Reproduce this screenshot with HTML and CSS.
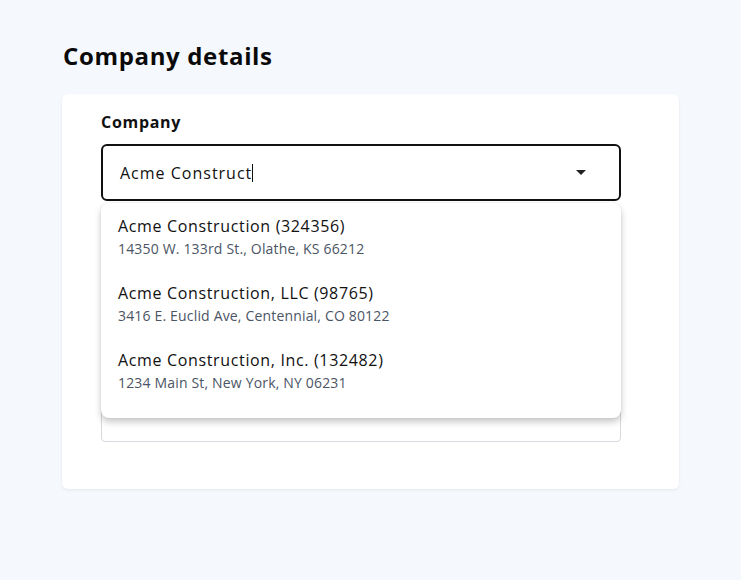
FILE: index.html
```html
<!DOCTYPE html>
<html lang="en">
<head>
<meta charset="utf-8">
<title>Company details</title>
<link rel="stylesheet" href="styles.css">
</head>
<body>
<main class="page">
  <h1 class="title">Company details</h1>
  <section class="card">
    <div class="field">
      <label class="label" for="company">Company</label>
      <div class="combo">
        <div class="input input-active">
          <span class="value">Acme Construct</span><span class="caret"></span>
          <svg class="arrow" width="10" height="5" viewBox="0 0 10 5"><path d="M0 0h10L5 5z" fill="#222"/></svg>
        </div>
        <ul class="menu">
          <li class="option">
            <div class="opt-name">Acme Construction (324356)</div>
            <div class="opt-addr">14350 W. 133rd St., Olathe, KS 66212</div>
          </li>
          <li class="option">
            <div class="opt-name">Acme Construction, LLC (98765)</div>
            <div class="opt-addr">3416 E. Euclid Ave, Centennial, CO 80122</div>
          </li>
          <li class="option">
            <div class="opt-name">Acme Construction, Inc. (132482)</div>
            <div class="opt-addr">1234 Main St, New York, NY 06231</div>
          </li>
        </ul>
      </div>
    </div>
    <div class="field field-second">
      <label class="label">Address</label>
      <div class="input input-plain"></div>
    </div>
  </section>
</main>
</body>
</html>
```

FILE: styles.css
```css
* { box-sizing: border-box; }
html, body { margin: 0; padding: 0; }
body {
  background: #f5f8fc;
  font-family: "Open Sans", "Liberation Sans", sans-serif;
  color: #111;
  width: 741px;
  height: 580px;
  overflow: hidden;
}
.page {
  padding: 40px 0 0 62px;
}
.title {
  margin: 0 0 0 1px;
  font-size: 24px;
  line-height: 32px;
  font-weight: 700;
  letter-spacing: 0.65px;
  color: #0a0a0a;
}
.card {
  margin-top: 22px;
  width: 617px;
  height: 395px;
  background: #fff;
  border-radius: 6px;
  box-shadow: 0 1px 3px rgba(30, 50, 80, 0.08);
  padding: 16px 58px 0 39px;
}
.field { display: flex; flex-direction: column; }
.label {
  font-size: 16px;
  line-height: 24px;
  font-weight: 700;
  letter-spacing: 0.7px;
  color: #111;
  margin-bottom: 10px;
}
.combo { position: relative; }
.input {
  height: 57px;
  border-radius: 6px;
  display: flex;
  align-items: center;
  padding: 0 33px 0 17px;
  font-size: 16px;
}
.input-active { border: 2px solid #111; }
.value { color: #111; letter-spacing: 1px; font-weight: 500; }
.caret {
  display: inline-block;
  width: 1px;
  height: 18px;
  background: #111;
  margin-left: 0;
}
.arrow { margin-left: auto; }
.field-second { margin-top: 150px; }
.field-second .label { visibility: hidden; }
.input-plain { border: 1px solid #d6d9de; border-radius: 4px; height: 57px; }
.menu {
  position: absolute;
  left: 0;
  right: 0;
  top: 59px;
  margin: 0;
  padding: 0 0 14px;
  list-style: none;
  background: #fff;
  border-radius: 8px;
  box-shadow: 0 4px 7px rgba(0, 0, 0, 0.22), 0 0 2px rgba(0, 0, 0, 0.08);
  z-index: 2;
}
.option {
  height: 67px;
  padding: 11px 17px 10px;
}
.opt-name {
  font-size: 16px;
  line-height: 24px;
  letter-spacing: 0.65px;
  font-weight: 500;
  color: #111;
}
.opt-addr {
  font-size: 14px;
  line-height: 22px;
  letter-spacing: 0.17px;
  font-weight: 500;
  color: #4b5565;
}
```
